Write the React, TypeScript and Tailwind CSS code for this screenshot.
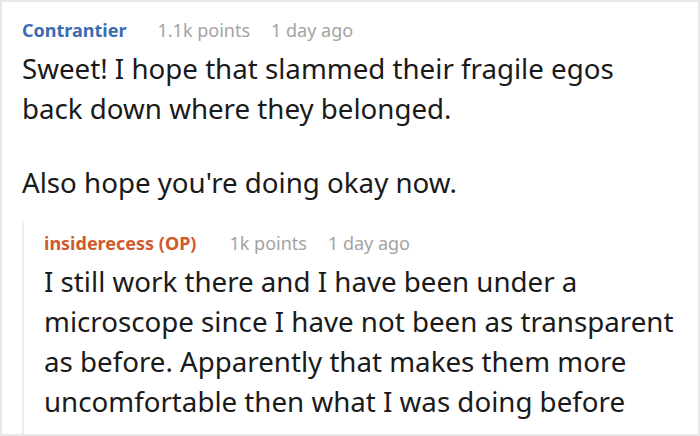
import React from 'react'

type Comment = {
  author: string
  op?: boolean
  points: string
  age: string
  paragraphs: string[][]
}

const parent: Comment = {
  author: 'Contrantier',
  points: '1.1k points',
  age: '1 day ago',
  paragraphs: [
    ['Sweet! I hope that slammed their fragile egos', 'back down where they belonged.'],
    ["Also hope you're doing okay now."],
  ],
}

const reply: Comment = {
  author: 'insiderecess (OP)',
  op: true,
  points: '1k points',
  age: '1 day ago',
  paragraphs: [
    [
      'I still work there and I have been under a',
      'microscope since I have not been as transparent',
      'as before. Apparently that makes them more',
      'uncomfortable then what I was doing before',
    ],
  ],
}

function Meta({ c }: { c: Comment }) {
  return (
    <div className="flex items-center text-[18px] leading-[24px] whitespace-nowrap">
      <span className={`font-bold ${c.op ? 'text-[#cf5a2b]' : 'text-[#3d6bb1]'}`}>{c.author}</span>
      <span className={`${c.op ? 'ml-[33px]' : 'ml-[31px]'} text-[#a3a3a3]`}>{c.points}</span>
      <span className="ml-[21px] text-[#a3a3a3]">{c.age}</span>
    </div>
  )
}

function Body({ c }: { c: Comment }) {
  return (
    <div className="mt-[6px] text-[27.7px] leading-[40px] text-[#1a1a1a]">
      {c.paragraphs.map((p, i) => (
        <p key={i} className={i > 0 ? 'mt-[34px]' : ''}>
          {p.map(line => (
            <span key={line} className="block whitespace-nowrap">{line}</span>
          ))}
        </p>
      ))}
    </div>
  )
}

export default function App() {
  return (
    <div
      className="w-[700px] h-[436px] overflow-hidden bg-white border-2 border-[#e8e8e8] pl-[20px] pt-[16px]"
      style={{ fontFamily: '"Noto Sans", "Open Sans", sans-serif' }}
    >
      <Meta c={parent} />
      <Body c={parent} />

      {/* nested reply */}
      <div className="mt-[19px] border-l-2 border-[#eeeeee] pl-[20px] pt-[10px] h-[300px]">
        <Meta c={reply} />
        <Body c={reply} />
      </div>
    </div>
  )
}
